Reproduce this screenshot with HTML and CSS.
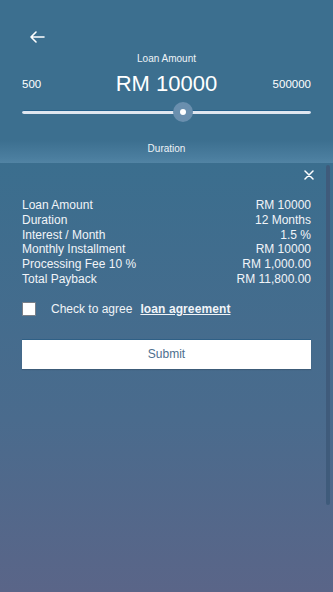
FILE: index.html
```html
<!DOCTYPE html>
<html>
<head>
<meta charset="utf-8">
<link rel="stylesheet" href="styles.css">
</head>
<body>
<div class="screen">
  <header class="top">
    <div class="back">
      <svg width="16" height="12" viewBox="0 0 16 12"><path d="M15 6H2M7 1L2 6l5 5" fill="none" stroke="#fff" stroke-width="1.6" stroke-linecap="round" stroke-linejoin="round"/></svg>
    </div>
    <div class="label">Loan Amount</div>
    <div class="amount-row">
      <span class="limit">500</span>
      <span class="amount">RM 10000</span>
      <span class="limit">500000</span>
    </div>
    <div class="slider">
      <div class="track"></div>
      <div class="thumb"><span class="dot"></span></div>
    </div>
    <div class="label duration">Duration</div>
  </header>
  <section class="panel">
    <div class="close-row">
      <svg width="10" height="10" viewBox="0 0 10 10"><path d="M1 1l8 8M9 1L1 9" stroke="#fff" stroke-width="1.5" stroke-linecap="round"/></svg>
    </div>
    <div class="rows">
      <div class="row"><span>Loan Amount</span><span>RM 10000</span></div>
      <div class="row"><span>Duration</span><span>12 Months</span></div>
      <div class="row"><span>Interest / Month</span><span>1.5 %</span></div>
      <div class="row"><span>Monthly Installment</span><span>RM 10000</span></div>
      <div class="row"><span>Processing Fee 10 %</span><span>RM 1,000.00</span></div>
      <div class="row"><span>Total Payback</span><span>RM 11,800.00</span></div>
    </div>
    <div class="agree">
      <span class="box"></span>
      <span class="agree-text">Check to agree</span>
      <span class="link">loan agreement</span>
    </div>
    <button class="submit">Submit</button>
    <div class="scrollbar"></div>
  </section>
</div>
</body>
</html>
```
FILE: styles.css
```css
html, body {
  margin: 0;
  padding: 0;
}
body {
  font-family: "Liberation Sans", Arial, sans-serif;
  color: #fff;
}
.screen {
  width: 333px;
  height: 592px;
  overflow: hidden;
  position: relative;
  background: linear-gradient(to bottom, #3b6e8e 0px, #3b6e8e 163px, #4a6b8d 420px, #5a6588 592px);
  display: flex;
  flex-direction: column;
}
.top {
  height: 163px;
  box-sizing: border-box;
  padding: 0 22px 7px;
  background: linear-gradient(to bottom, #3c6f8f 0px, #3c6f8f 140px, #4b7e9f 158px, #5284a4 163px);
  display: flex;
  flex-direction: column;
}
.back {
  margin-top: 31px;
  margin-left: 7px;
  height: 12px;
  display: flex;
}
.label {
  margin-top: 9px;
  font-size: 10px;
  line-height: 14px;
  text-align: center;
  color: #eef3f7;
}
.amount-row {
  margin-top: 5px;
  height: 26px;
  display: flex;
  align-items: center;
  justify-content: space-between;
}
.limit {
  font-size: 11.5px;
  width: 50px;
}
.limit:last-child {
  text-align: right;
}
.amount {
  font-size: 22px;
  line-height: 26px;
}
.slider {
  margin-top: 5px;
  height: 20px;
  position: relative;
  display: flex;
  align-items: center;
}
.track {
  width: 100%;
  height: 3px;
  background: #dfe6f0;
  border-top: 1px solid #25618c;
  border-radius: 2px;
}
.thumb {
  position: absolute;
  left: 151px;
  top: 0;
  width: 20px;
  height: 20px;
  border-radius: 50%;
  background: #6a8fae;
  display: flex;
  align-items: center;
  justify-content: center;
}
.dot {
  width: 6px;
  height: 6px;
  border-radius: 50%;
  background: #fff;
}
.duration {
  margin-top: 21px;
}
.panel {
  position: relative;
  flex: 1;
  padding: 0 22px;
  display: flex;
  flex-direction: column;
}
.close-row {
  margin-top: 7px;
  height: 10px;
  display: flex;
  justify-content: flex-end;
  margin-right: -3px;
}
.rows {
  margin-top: 18px;
  display: flex;
  flex-direction: column;
}
.row {
  display: flex;
  justify-content: space-between;
  font-size: 12px;
  line-height: 14.8px;
  color: #f1f4f8;
}
.agree {
  margin-top: 15px;
  height: 14px;
  display: flex;
  align-items: center;
  font-size: 12px;
}
.box {
  width: 12px;
  height: 12px;
  background: #fff;
  border: 1px solid #7a7f87;
  border-radius: 1px;
}
.agree-text {
  margin-left: 15px;
  color: #f1f4f8;
}
.link {
  margin-left: 8px;
  font-weight: bold;
  text-decoration: underline;
  letter-spacing: 0.1px;
  color: #f1f4f8;
}
.submit {
  margin-top: 23px;
  height: 30px;
  width: 100%;
  border: none;
  background: #fff;
  color: #4d6f8e;
  font-family: "Liberation Sans", Arial, sans-serif;
  font-size: 12px;
  border-top: 1px solid #2f6086;
  box-shadow: 0 1px 1px rgba(0,0,0,0.15);
  padding: 0;
}
.scrollbar {
  position: absolute;
  right: 3px;
  top: 2px;
  width: 4px;
  height: 340px;
  border-radius: 2px;
  background: #3f5b7b;
}
```
